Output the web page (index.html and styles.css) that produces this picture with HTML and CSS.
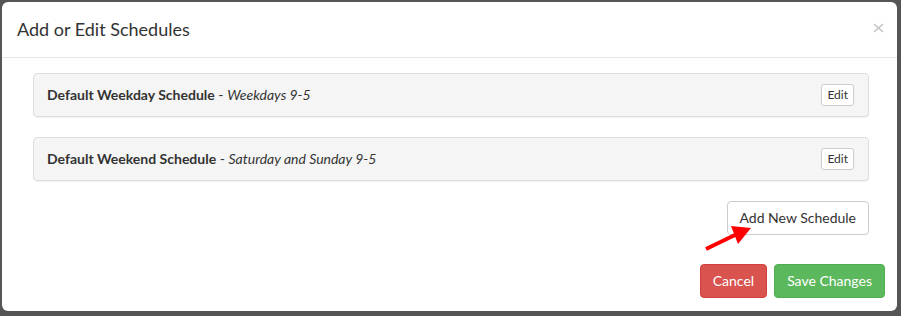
FILE: index.html
```html
<!DOCTYPE html>
<html>
<head>
<meta charset="utf-8">
<link rel="stylesheet" href="styles.css">
</head>
<body>
<div class="modal">
  <div class="modal-header">
    <h4 class="modal-title">Add or Edit Schedules</h4>
    <svg class="close" width="11" height="10" viewBox="0 0 11 10"><path d="M1 1 L10 9 M10 1 L1 9" stroke="#c4c4c4" stroke-width="1.6" fill="none"/></svg>
  </div>
  <div class="modal-body">
    <div class="panel">
      <div class="panel-text"><strong>Default Weekday Schedule</strong> - <em>Weekdays 9-5</em></div>
      <button class="btn btn-xs">Edit</button>
    </div>
    <div class="panel">
      <div class="panel-text"><strong>Default Weekend Schedule</strong> - <em>Saturday and Sunday 9-5</em></div>
      <button class="btn btn-xs">Edit</button>
    </div>
    <div class="add-row">
      <button class="btn btn-default">Add New Schedule</button>
    </div>
  </div>
  <div class="modal-footer">
    <button class="btn btn-danger">Cancel</button>
    <button class="btn btn-success">Save Changes</button>
  </div>
</div>
<svg class="arrow" width="901" height="316" viewBox="0 0 901 316">
  <line x1="706" y1="249" x2="737" y2="234" stroke="#ff0000" stroke-width="4"/>
  <polygon points="751,228 731,226 738,244" fill="#ff0000"/>
</svg>
</body>
</html>
```
FILE: styles.css
```css
html, body {
  margin: 0;
  padding: 0;
}
body {
  background: #555555;
  width: 901px;
  height: 316px;
  position: relative;
  overflow: hidden;
  font-family: Lato, "Open Sans", sans-serif;
  color: #333333;
  font-size: 14px;
}
.modal {
  position: absolute;
  left: 2px;
  top: 2px;
  width: 895px;
  height: 309px;
  background: #ffffff;
  border-radius: 6px;
  box-sizing: border-box;
  display: flex;
  flex-direction: column;
}
.modal-header {
  display: flex;
  justify-content: space-between;
  align-items: center;
  padding: 15px 13px 15px 15px;
  border-bottom: 1px solid #e5e5e5;
}
.modal-title {
  margin: 0;
  font-size: 18px;
  font-weight: 400;
  line-height: 25px;
  color: #333333;
}
.close {
  display: block;
  margin-top: -3px;
}
.modal-body {
  padding: 15px 28px 0 31px;
}
.panel {
  display: flex;
  justify-content: space-between;
  align-items: center;
  height: 44px;
  box-sizing: border-box;
  background: #f5f5f5;
  border: 1px solid #dddddd;
  border-radius: 4px;
  box-shadow: 0 1px 1px rgba(0,0,0,0.05);
  padding: 0 14px 0 13px;
  margin-bottom: 20px;
}
.panel-text {
  line-height: 20px;
}
.panel-text strong {
  font-weight: 700;
}
.btn {
  font-family: Lato, "Open Sans", sans-serif;
  font-size: 14px;
  line-height: 20px;
  padding: 6px 12px;
  border-radius: 4px;
  border: 1px solid transparent;
  cursor: pointer;
}
.btn-xs {
  font-size: 12px;
  line-height: 18px;
  padding: 1px 5px;
  border-radius: 3px;
  background: #ffffff;
  border-color: #cccccc;
  color: #333333;
}
.add-row {
  display: flex;
  justify-content: flex-end;
}
.btn-default {
  background: #ffffff;
  border-color: #cccccc;
  color: #333333;
}
.modal-footer {
  display: flex;
  justify-content: flex-end;
  gap: 7px;
  padding: 29px 12px 13px 15px;
}
.btn-danger {
  background: #d9534f;
  border-color: #d43f3a;
  color: #ffffff;
}
.btn-success {
  background: #5cb85c;
  border-color: #4cae4c;
  color: #ffffff;
}
.arrow {
  position: absolute;
  left: 0;
  top: 0;
  pointer-events: none;
}
```
